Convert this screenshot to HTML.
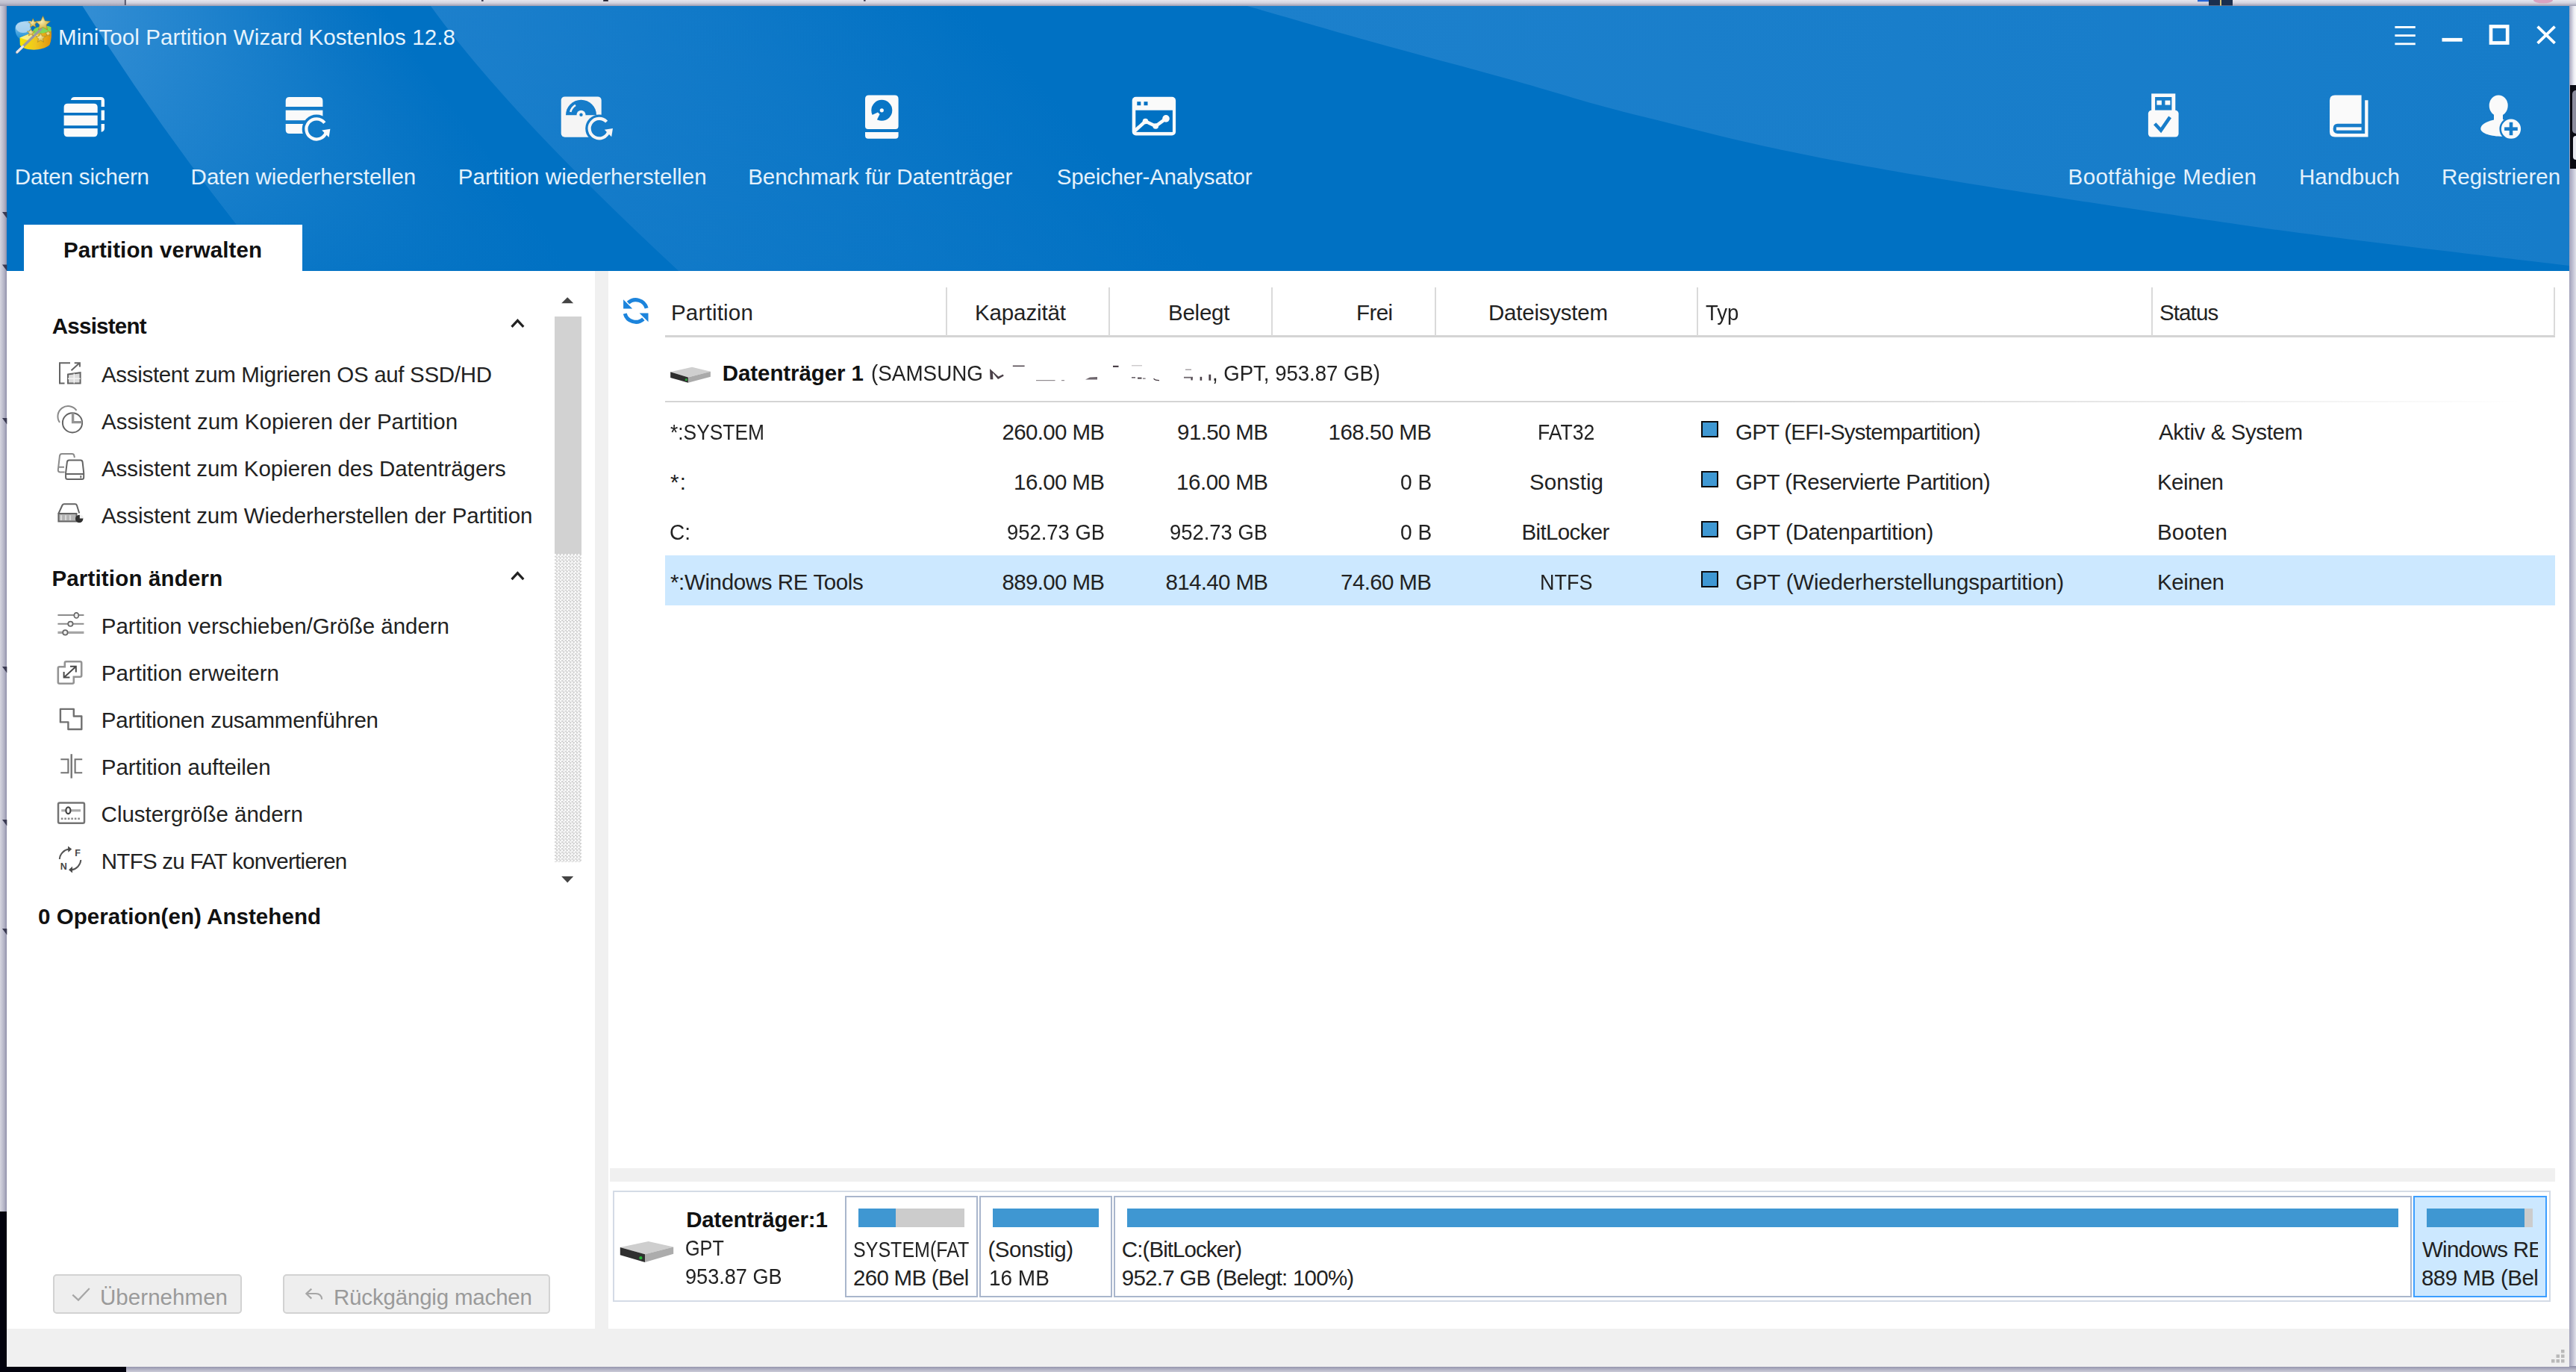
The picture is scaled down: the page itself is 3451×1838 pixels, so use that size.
<!DOCTYPE html>
<html lang="de">
<head>
<meta charset="utf-8">
<title>MiniTool Partition Wizard Kostenlos 12.8</title>
<style>
html,body{margin:0;padding:0;}
body{width:3451px;height:1838px;overflow:hidden;position:relative;background:#c9c9d6;font-family:"Liberation Sans",sans-serif;}
.a{position:absolute;}
.t{position:absolute;white-space:nowrap;line-height:1;color:#222222;font-family:"Liberation Sans",sans-serif;}
#bgtop{left:0;top:0;width:3451px;height:9px;background:linear-gradient(to bottom,#e6e6ee 0%,#d2d2de 45%,#8f8fa6 100%);}
#bgleft{left:0;top:8px;width:10px;height:1616px;background:linear-gradient(to right,#d6d6e0 0%,#b4b4c6 55%,#8787a2 100%);}
#bgleft2{left:0;top:1623px;width:10px;height:215px;background:#03030e;}
#bgright{left:3442px;top:8px;width:9px;height:1830px;background:linear-gradient(to right,#a1a1ba 0%,#b9b9cd 40%,#e0e0e9 100%);}
#bgrblack{left:3442.6px;top:113.5px;width:9px;height:112.5px;background:#0a0a12;}
#bgbot{left:0;top:1830px;width:3451px;height:9px;background:linear-gradient(to bottom,#8d8da6 0%,#b9b9ca 60%,#cfcfdb 100%);}
#bgbot2{left:0;top:1829px;width:169px;height:9px;background:#03030e;}
#win{left:9px;top:8.3px;width:3433.4px;height:1822.2px;background:#fff;}
#hdr{left:9px;top:8px;width:3433.4px;height:355px;background:#0071c3;overflow:hidden;}
#tab{left:31.5px;top:301px;width:373.5px;height:63px;background:#fff;}
#sbthumb{left:742.5px;top:424px;width:36px;height:317.5px;background:#d2d2d2;}
#sbtrack{left:742.5px;top:741.5px;width:36px;height:413.5px;background:repeating-conic-gradient(#d2d2d2 0% 25%,#ffffff 0% 50%) 0 0/4.5px 4.5px;}
#vdiv{left:797px;top:363px;width:18px;height:1417px;background:#f0f0f0;}
#hdiv{left:817px;top:1565px;width:2605.5px;height:18px;background:#f0f0f0;}
#status{left:9px;top:1780px;width:3433.4px;height:50.5px;background:#f0f0f0;}
.btn{background:#eeeeee;border:2px solid #d2d2d2;border-radius:5px;box-sizing:border-box;}
#thline{left:891px;top:449px;width:2532px;height:2.5px;background:#d4d4d4;}
.vsep{top:385px;width:2px;height:65px;background:#dadada;}
#dline{left:891px;top:536.5px;width:2490px;height:2.5px;background:linear-gradient(to right,#d4d4d4 0%,#d4d4d4 60%,rgba(212,212,212,0) 100%);}
#selrow{left:891px;top:744px;width:2531.5px;height:67px;background:#cce8ff;}
.sq{width:18.4px;height:17.7px;background:#3f98d3;border:2.3px solid #0b0b0d;box-sizing:content-box;left:2279.2px;}
#dmap{left:821px;top:1595px;width:2596px;height:149px;border:2px solid #d4dbe6;box-sizing:border-box;background:#fff;}
.pbox{top:1602px;height:136px;border:2px solid #a9b6cc;box-sizing:border-box;background:#fff;}
.pbar{top:1619px;height:25px;background:#3f97d2;}
.gbar{top:1619px;height:25px;background:#cccccc;}
</style>
</head>
<body>
<div class="a" id="bgtop"></div>
<div class="a" id="bgleft"></div>
<div class="a" id="bgleft2"></div>
<div class="a" id="bgright"></div>
<div class="a" style="left:3442px;top:8px;width:9px;height:106px;background:linear-gradient(to right,#a3a3bc 0%,#c8c8d8 35%,#ececf2 70%,#f8f8fa 100%);"></div>
<div class="a" id="bgrblack"></div>
<div class="a" style="left:3446px;top:121px;width:5px;height:58px;background:#8c8c9c;border-radius:5px 0 0 5px;"></div>
<div class="a" style="left:3447px;top:182px;width:4px;height:32px;background:#e8e8ee;border-radius:4px 0 0 4px;"></div>
<div class="a" id="bgbot"></div>
<div class="a" id="bgbot2"></div>
<div class="a" id="win"></div>
<div class="a" id="hdr">
<svg class="a" style="left:0;top:0" width="3434" height="355" viewBox="9 8 3434 355">
<defs>
<linearGradient id="gA" gradientUnits="userSpaceOnUse" x1="0" y1="0" x2="400" y2="0">
<stop offset="0" stop-color="#338ed4"/><stop offset="0.35" stop-color="#2284ce"/><stop offset="0.75" stop-color="#0d77c6"/><stop offset="1" stop-color="#0071c3"/>
</linearGradient>
<linearGradient id="gB" gradientUnits="userSpaceOnUse" x1="0" y1="0" x2="720" y2="0">
<stop offset="0" stop-color="#1d80cc"/><stop offset="0.5" stop-color="#1079c8"/><stop offset="1" stop-color="#0071c3"/>
</linearGradient>
<linearGradient id="gC" gradientUnits="userSpaceOnUse" x1="1667" y1="0" x2="3443" y2="0">
<stop offset="0" stop-color="#1c80cc"/><stop offset="1" stop-color="#167cc9"/>
</linearGradient>
<linearGradient id="gV" x1="0" y1="0" x2="0" y2="1"><stop offset="0" stop-color="#0071c3" stop-opacity="0"/><stop offset="1" stop-color="#0071c3" stop-opacity="0.8"/></linearGradient>
<clipPath id="cA"><path d="M110.5,8 Q221.9,185.9 366.7,363 L909.4,363 Q678.9,149.6 577,8 Z"/></clipPath>
<clipPath id="cB"><path d="M577,8 Q678.9,149.6 909.4,363 L2600,363 L2600,8 Z"/></clipPath>
</defs>
<g clip-path="url(#cA)"><rect x="-60" y="0" width="1000" height="355" fill="url(#gA)" transform="translate(110.5,8) skewX(35.8)"/><rect x="9" y="8" width="1000" height="355" fill="url(#gV)"/></g>
<g clip-path="url(#cB)"><rect x="-60" y="0" width="1500" height="355" fill="url(#gB)" transform="translate(577,8) skewX(43.1)"/><rect x="500" y="8" width="2200" height="355" fill="url(#gV)" opacity="0.55"/></g>
<path d="M1671,8 C1698.8,16.0 1779.0,39.5 1838,56 C1897.0,72.5 1964.7,90.3 2025,107 C2085.3,123.7 2123.3,137.2 2200,156 C2276.7,174.8 2349.2,195.5 2485,220 C2620.8,244.5 2855.3,280.3 3015,303 C3174.7,325.7 3371.7,347.2 3443,356 L3443,8 Z" fill="url(#gC)"/>
</svg>

</div>
<div class="a" id="tab"></div>
<div class="a" id="sbthumb"></div>
<div class="a" id="sbtrack"></div>
<div class="a" id="vdiv"></div>
<div class="a" id="hdiv"></div>
<div class="a" id="status"></div>
<div class="a btn" style="left:70.5px;top:1707px;width:253.5px;height:53px;"></div>
<div class="a btn" style="left:378.5px;top:1707px;width:358px;height:53px;"></div>
<div class="a" id="thline"></div>
<div class="a vsep" style="left:1267px;"></div>
<div class="a vsep" style="left:1485px;"></div>
<div class="a vsep" style="left:1703px;"></div>
<div class="a vsep" style="left:1921.5px;"></div>
<div class="a vsep" style="left:2272.7px;"></div>
<div class="a vsep" style="left:2882.4px;"></div>
<div class="a vsep" style="left:3421px;"></div>
<div class="a" id="dline"></div>
<div class="a" id="selrow"></div>
<div class="a sq" style="top:564px;"></div>
<div class="a sq" style="top:631px;"></div>
<div class="a sq" style="top:698.3px;"></div>
<div class="a sq" style="top:765.4px;"></div>
<div class="a" id="dmap"></div>
<div class="a pbox" style="left:1132px;width:177.5px;"></div>
<div class="a pbox" style="left:1312px;width:177.5px;"></div>
<div class="a pbox" style="left:1492px;width:1739px;"></div>
<div class="a pbox" style="left:3233px;width:178.5px;background:#cce8ff;border-color:#3c9eff;"></div>
<div class="a pbar" style="left:1150px;width:49.7px;"></div>
<div class="a gbar" style="left:1199.7px;width:92px;"></div>
<div class="a pbar" style="left:1330px;width:141.6px;"></div>
<div class="a pbar" style="left:1509.6px;width:1703.4px;"></div>
<div class="a pbar" style="left:3251px;width:130.6px;"></div>
<div class="a gbar" style="left:3381.6px;width:11.4px;"></div>
<span class="t" style="left:78.0px;top:34.8px;font-size:29.5px;color:#e6f3fc;letter-spacing:0.103px;">MiniTool Partition Wizard Kostenlos 12.8</span>
<span class="t" style="left:19.8px;top:222.2px;font-size:29.5px;color:#e4f1fb;letter-spacing:-0.151px;">Daten sichern</span>
<span class="t" style="left:255.6px;top:222.2px;font-size:29.5px;color:#e4f1fb;letter-spacing:-0.006px;">Daten wiederherstellen</span>
<span class="t" style="left:613.8px;top:222.2px;font-size:29.5px;color:#e4f1fb;letter-spacing:0.063px;">Partition wiederherstellen</span>
<span class="t" style="left:1002.2px;top:222.2px;font-size:29.5px;color:#e4f1fb;letter-spacing:-0.067px;">Benchmark für Datenträger</span>
<span class="t" style="left:1415.8px;top:222.2px;font-size:29.5px;color:#e4f1fb;letter-spacing:-0.213px;">Speicher-Analysator</span>
<span class="t" style="left:2770.6px;top:222.2px;font-size:29.5px;color:#e4f1fb;letter-spacing:0.399px;">Bootfähige Medien</span>
<span class="t" style="left:3080.0px;top:222.2px;font-size:29.5px;color:#e4f1fb;letter-spacing:0.043px;">Handbuch</span>
<span class="t" style="left:3271.0px;top:222.2px;font-size:29.5px;color:#e4f1fb;">Registrieren</span>
<span class="t" style="left:85.0px;top:320.2px;font-size:29.5px;font-weight:700;color:#111;letter-spacing:0.115px;">Partition verwalten</span>
<span class="t" style="left:69.8px;top:421.7px;font-size:29.5px;font-weight:700;color:#111;letter-spacing:-0.750px;">Assistent</span>
<span class="t" style="left:136.0px;top:487.0px;font-size:29.5px;letter-spacing:-0.318px;">Assistent zum Migrieren OS auf SSD/HD</span>
<span class="t" style="left:136.0px;top:550.1px;font-size:29.5px;">Assistent zum Kopieren der Partition</span>
<span class="t" style="left:136.0px;top:613.1px;font-size:29.5px;letter-spacing:-0.068px;">Assistent zum Kopieren des Datenträgers</span>
<span class="t" style="left:136.0px;top:676.0px;font-size:29.5px;letter-spacing:-0.070px;">Assistent zum Wiederherstellen der Partition</span>
<span class="t" style="left:69.4px;top:759.5px;font-size:29.5px;font-weight:700;color:#111;letter-spacing:0.173px;">Partition ändern</span>
<span class="t" style="left:135.8px;top:824.4px;font-size:29.5px;letter-spacing:-0.035px;">Partition verschieben/Größe ändern</span>
<span class="t" style="left:135.8px;top:887.4px;font-size:29.5px;letter-spacing:0.025px;">Partition erweitern</span>
<span class="t" style="left:135.8px;top:950.4px;font-size:29.5px;letter-spacing:-0.238px;">Partitionen zusammenführen</span>
<span class="t" style="left:135.8px;top:1013.4px;font-size:29.5px;letter-spacing:-0.064px;">Partition aufteilen</span>
<span class="t" style="left:135.6px;top:1076.4px;font-size:29.5px;letter-spacing:-0.020px;">Clustergröße ändern</span>
<span class="t" style="left:135.8px;top:1139.4px;font-size:29.5px;letter-spacing:-0.742px;">NTFS zu FAT konvertieren</span>
<span class="t" style="left:51.0px;top:1213.2px;font-size:29.5px;font-weight:700;color:#111;letter-spacing:0.061px;">0 Operation(en) Anstehend</span>
<span class="t" style="left:134.0px;top:1722.7px;font-size:29.5px;color:#9a9a9a;letter-spacing:0.050px;">Übernehmen</span>
<span class="t" style="left:447.0px;top:1722.7px;font-size:29.5px;color:#9a9a9a;letter-spacing:-0.185px;">Rückgängig machen</span>
<span class="t" style="left:899.0px;top:404.2px;font-size:29.5px;letter-spacing:0.196px;">Partition</span>
<span class="t" style="left:1306.0px;top:404.2px;font-size:29.5px;letter-spacing:-0.125px;">Kapazität</span>
<span class="t" style="left:1565.0px;top:404.2px;font-size:29.5px;letter-spacing:-0.251px;">Belegt</span>
<span class="t" style="left:1817.0px;top:404.2px;font-size:29.5px;letter-spacing:-0.604px;">Frei</span>
<span class="t" style="left:1994.0px;top:404.2px;font-size:29.5px;letter-spacing:-0.230px;">Dateisystem</span>
<span class="t" style="left:2285.0px;top:404.2px;font-size:29.5px;transform:scaleX(0.9335);transform-origin:0 0;">Typ</span>
<span class="t" style="left:2893.0px;top:404.2px;font-size:29.5px;letter-spacing:-0.888px;">Status</span>
<span class="t" style="left:967.8px;top:485.2px;font-size:29.5px;font-weight:700;color:#111;letter-spacing:-0.082px;">Datenträger 1</span>
<span class="t" style="left:1167.0px;top:485.2px;font-size:29.5px;transform:scaleX(0.9435);transform-origin:0 0;">(SAMSUNG</span>
<span class="t" style="left:1624.0px;top:485.2px;font-size:29.5px;transform:scaleX(0.9335);transform-origin:0 0;">, GPT, 953.87 GB)</span>
<span class="t" style="left:898.0px;top:563.7px;font-size:29.5px;transform:scaleX(0.8937);transform-origin:0 0;">*:SYSTEM</span>
<span class="t" style="left:1342.6px;top:563.7px;font-size:29.5px;letter-spacing:-0.661px;">260.00 MB</span>
<span class="t" style="left:1577.1px;top:563.7px;font-size:29.5px;letter-spacing:-0.623px;">91.50 MB</span>
<span class="t" style="left:1779.6px;top:563.7px;font-size:29.5px;letter-spacing:-0.536px;">168.50 MB</span>
<span class="t" style="left:2059.8px;top:563.7px;font-size:29.5px;transform:scaleX(0.9018);transform-origin:0 0;">FAT32</span>
<span class="t" style="left:2325.0px;top:563.7px;font-size:29.5px;letter-spacing:-0.766px;">GPT (EFI-Systempartition)</span>
<span class="t" style="left:2892.0px;top:563.7px;font-size:29.5px;letter-spacing:-0.412px;">Aktiv &amp; System</span>
<span class="t" style="left:898.0px;top:630.7px;font-size:29.5px;letter-spacing:1.312px;">*:</span>
<span class="t" style="left:1358.1px;top:630.7px;font-size:29.5px;letter-spacing:-0.623px;">16.00 MB</span>
<span class="t" style="left:1576.1px;top:630.7px;font-size:29.5px;letter-spacing:-0.480px;">16.00 MB</span>
<span class="t" style="left:1875.8px;top:630.7px;font-size:29.5px;transform:scaleX(0.9530);transform-origin:0 0;">0 B</span>
<span class="t" style="left:2049.0px;top:630.7px;font-size:29.5px;letter-spacing:0.099px;">Sonstig</span>
<span class="t" style="left:2325.0px;top:630.7px;font-size:29.5px;letter-spacing:-0.523px;">GPT (Reservierte Partition)</span>
<span class="t" style="left:2890.0px;top:630.7px;font-size:29.5px;letter-spacing:-0.572px;">Keinen</span>
<span class="t" style="left:897.0px;top:698.0px;font-size:29.5px;transform:scaleX(0.9492);transform-origin:0 0;">C:</span>
<span class="t" style="left:1349.0px;top:698.0px;font-size:29.5px;transform:scaleX(0.9288);transform-origin:0 0;">952.73 GB</span>
<span class="t" style="left:1567.0px;top:698.0px;font-size:29.5px;transform:scaleX(0.9288);transform-origin:0 0;">952.73 GB</span>
<span class="t" style="left:1875.8px;top:698.0px;font-size:29.5px;transform:scaleX(0.9530);transform-origin:0 0;">0 B</span>
<span class="t" style="left:2038.6px;top:698.0px;font-size:29.5px;letter-spacing:-0.648px;">BitLocker</span>
<span class="t" style="left:2325.0px;top:698.0px;font-size:29.5px;letter-spacing:-0.328px;">GPT (Datenpartition)</span>
<span class="t" style="left:2890.0px;top:698.0px;font-size:29.5px;letter-spacing:0.100px;">Booten</span>
<span class="t" style="left:898.0px;top:765.1px;font-size:29.5px;letter-spacing:-0.368px;">*:Windows RE Tools</span>
<span class="t" style="left:1342.6px;top:765.1px;font-size:29.5px;letter-spacing:-0.661px;">889.00 MB</span>
<span class="t" style="left:1561.6px;top:765.1px;font-size:29.5px;letter-spacing:-0.661px;">814.40 MB</span>
<span class="t" style="left:1796.1px;top:765.1px;font-size:29.5px;letter-spacing:-0.623px;">74.60 MB</span>
<span class="t" style="left:2062.8px;top:765.1px;font-size:29.5px;transform:scaleX(0.9139);transform-origin:0 0;">NTFS</span>
<span class="t" style="left:2325.0px;top:765.1px;font-size:29.5px;letter-spacing:-0.169px;">GPT (Wiederherstellungspartition)</span>
<span class="t" style="left:2890.0px;top:765.1px;font-size:29.5px;letter-spacing:-0.372px;">Keinen</span>
<span class="t" style="left:919.2px;top:1618.5px;font-size:29.5px;font-weight:700;color:#111;letter-spacing:-0.184px;">Datenträger:1</span>
<span class="t" style="left:918.0px;top:1656.7px;font-size:29.5px;transform:scaleX(0.8540);transform-origin:0 0;">GPT</span>
<span class="t" style="left:918.0px;top:1694.6px;font-size:29.5px;transform:scaleX(0.9188);transform-origin:0 0;">953.87 GB</span>
<span class="t" style="left:1143.0px;top:1658.9px;font-size:29.5px;transform:scaleX(0.8490);transform-origin:0 0;">SYSTEM(FAT</span>
<span class="t" style="left:1143.0px;top:1697.2px;font-size:29.5px;letter-spacing:-0.713px;">260 MB (Bel</span>
<span class="t" style="left:1323.4px;top:1658.9px;font-size:29.5px;letter-spacing:-0.406px;">(Sonstig)</span>
<span class="t" style="left:1324.8px;top:1697.2px;font-size:29.5px;transform:scaleX(0.9476);transform-origin:0 0;">16 MB</span>
<span class="t" style="left:1502.8px;top:1658.9px;font-size:29.5px;letter-spacing:-0.910px;">C:(BitLocker)</span>
<span class="t" style="left:1502.8px;top:1697.2px;font-size:29.5px;letter-spacing:-0.754px;">952.7 GB (Belegt: 100%)</span>
<span class="t" style="left:3245.0px;top:1658.9px;font-size:29.5px;letter-spacing:-0.759px;width:155.0px;overflow:hidden;">Windows RE Tools</span>
<span class="t" style="left:3244.0px;top:1697.2px;font-size:29.5px;letter-spacing:-0.553px;">889 MB (Bel</span>
<svg class="a" style="left:0;top:0" width="3451" height="1838" viewBox="0 0 3451 1838"><!-- ===== toolbar icons ===== -->
<g fill="#fafafa" stroke="none">
<!-- icon1: Daten sichern -->
<path d="M85.6,151.1 V143.7 Q85.6,138.7 90.6,138.7 H125.7 Q130.7,138.7 130.7,143.7 V151.1 Z"/>
<rect x="85.6" y="154.6" width="45.1" height="13.6"/>
<path d="M85.6,172.1 H130.7 V178.3 Q130.7,183.3 125.7,183.3 H90.6 Q85.6,183.3 85.6,178.3 Z"/>
<path d="M95,134 Q95.5,129.9 100,129.9 H135 Q140,129.9 140,134.9 V143 H135.6 V134 Z"/>
<rect x="135.6" y="147.7" width="4.4" height="13.5"/>
<path d="M135.6,165.9 H140 V172 Q140,176 135.6,176.8 Z"/>
</g>
<!-- icon2: Daten wiederherstellen -->
<mask id="m2" maskUnits="userSpaceOnUse" x="370" y="120" width="90" height="80"><rect x="370" y="120" width="90" height="80" fill="#fff"/><circle cx="424" cy="172.9" r="19.3" fill="#000"/></mask>
<g fill="#fafafa" mask="url(#m2)">
<path d="M382.7,142.9 V134.9 Q382.7,129.9 387.7,129.9 H427.4 Q432.4,129.9 432.4,134.9 V142.9 Z"/>
<rect x="382.7" y="147.7" width="49.7" height="13.5"/>
<path d="M382.7,165.9 H410 V179.1 H387.7 Q382.7,179.1 382.7,174.1 Z"/>
</g>
<g fill="none" stroke="#fafafa" stroke-width="4.2">
<path d="M434.8,164.6 A13.6,13.6 0 1 0 436.9,177.3"/>
</g>
<path d="M431.2,174.6 L442.4,172.8 L440.6,184 Z" fill="#fafafa"/>
<!-- icon3: Partition wiederherstellen -->
<mask id="m3" maskUnits="userSpaceOnUse" x="740" y="120" width="90" height="80"><rect x="740" y="120" width="90" height="80" fill="#fff"/>
<path d="M758,154.2 A20.5,20.5 0 0 1 799,154.2 Z" fill="#000"/>
<circle cx="778.5" cy="153.7" r="6" fill="#fff"/>
<circle cx="778.5" cy="153.7" r="2.2" fill="#000"/>
<path d="M764.3,150 A14.8,14.8 0 0 1 771,140.9" stroke="#fff" stroke-width="2.6" fill="none"/>
<circle cx="802.8" cy="172.1" r="18.6" fill="#000"/></mask>
<rect x="751.7" y="129.4" width="54" height="54.4" rx="5" fill="#f5f5f5" mask="url(#m3)"/>
<path d="M812.6,163.2 A13.2,13.2 0 1 0 815.4,176.2" fill="none" stroke="#f5f5f5" stroke-width="4.2"/>
<path d="M809.8,173.8 L821,172 L819.2,183.2 Z" fill="#f5f5f5"/>
<!-- icon4: Benchmark -->
<mask id="m4" maskUnits="userSpaceOnUse" x="1150" y="120" width="70" height="80"><rect x="1150" y="120" width="70" height="80" fill="#fff"/>
<circle cx="1181.3" cy="147.8" r="14" fill="#000"/>
<circle cx="1181.3" cy="147.8" r="2.6" fill="#fff"/>
<path d="M1178.6,152.9 L1174.4,161.2 A15.5,15.5 0 0 1 1167.4,154.6 L1176,150.4 Z" fill="#fff"/></mask>
<g fill="#fafafa" mask="url(#m4)">
<path d="M1159,132.5 Q1159,127.5 1164,127.5 H1198.6 Q1203.6,127.5 1203.6,132.5 V169 Q1203.6,173 1199.6,173 H1163 Q1159,173 1159,169 Z"/>
<path d="M1159,177 H1203.6 V181.7 Q1203.6,185.7 1199.6,185.7 H1163 Q1159,185.7 1159,181.7 Z"/>
</g>
<!-- icon5: Speicher-Analysator -->
<mask id="m5" maskUnits="userSpaceOnUse" x="1500" y="120" width="90" height="80"><rect x="1500" y="120" width="90" height="80" fill="#fff"/>
<rect x="1521.3" y="147.7" width="49.6" height="29.2" fill="#000"/>
<rect x="1523.3" y="136.2" width="5" height="5" fill="#000"/><rect x="1532.5" y="136.2" width="5" height="5" fill="#000"/>
<g stroke="#fff" stroke-width="4.6" fill="none" stroke-linejoin="round" stroke-linecap="round"><path d="M1519,176.5 L1534.5,162.5 L1548.2,169 L1562,158.9"/></g>
<circle cx="1534.5" cy="162.5" r="3.8" fill="#fff"/><circle cx="1548.2" cy="169" r="3.8" fill="#fff"/><circle cx="1562" cy="158.9" r="4.8" fill="#fff"/>
</mask>
<rect x="1516.7" y="129.7" width="58.4" height="51.8" rx="5" fill="#fafafa" mask="url(#m5)"/>
<!-- USB -->
<mask id="m6" maskUnits="userSpaceOnUse" x="2860" y="115" width="80" height="80"><rect x="2860" y="115" width="80" height="80" fill="#fff"/>
<rect x="2887.1" y="130" width="22.3" height="17.6" fill="#000"/>
<rect x="2889.4" y="134.6" width="6.5" height="6" fill="#fff"/><rect x="2900.5" y="134.6" width="6.9" height="6" fill="#fff"/>
<path d="M2886.7,165.8 L2894.9,174.6 L2907.1,156.9" stroke="#000" stroke-width="4.6" fill="none"/></mask>
<g fill="#fafafa" mask="url(#m6)">
<rect x="2882.2" y="125.4" width="32.1" height="24"/>
<rect x="2877.9" y="147.7" width="40.7" height="35.8" rx="4.5"/>
</g>
<!-- Book -->
<g fill="#fafafa">
<path d="M3163.6,127.4 H3128 Q3121,127.4 3121,134.4 V176.5 Q3121,183.5 3128,183.5 H3172.5 V134.3 H3168.2 V178.9 H3131.6 Q3125.6,178.9 3125.6,172.4 Q3125.6,165.8 3131.6,165.8 H3163.6 Z"/>
<rect x="3129.9" y="170.4" width="33.7" height="4.2"/>
</g>
<!-- User -->
<mask id="m8" maskUnits="userSpaceOnUse" x="3310" y="115" width="80" height="80"><rect x="3310" y="115" width="80" height="80" fill="#fff"/><circle cx="3364" cy="172.7" r="15.6" fill="#000"/></mask>
<g fill="#fafafa" mask="url(#m8)">
<ellipse cx="3347.2" cy="141.5" rx="12.5" ry="14.1"/>
<path d="M3341,150 H3353 V163 H3341 Z"/>
<path d="M3341,160.5 C3330,163 3323.3,167 3323.3,172.5 C3323.3,179 3338,182.8 3352,182.8 L3360,182.8 L3360,160 Z"/>
</g>
<mask id="m9" maskUnits="userSpaceOnUse" x="3340" y="150" width="50" height="45"><rect x="3340" y="150" width="50" height="45" fill="#fff"/><rect x="3355.1" y="170.4" width="17.7" height="4.6" fill="#000"/><rect x="3361.7" y="163.8" width="4.6" height="17.4" fill="#000"/></mask>
<circle cx="3364" cy="172.7" r="13.1" fill="#fafafa" mask="url(#m9)"/>
<!-- window controls -->
<g fill="#ffffff">
<rect x="3208.4" y="35" width="27.4" height="2.8"/><rect x="3208.4" y="46.2" width="27.4" height="2.8"/><rect x="3208.4" y="57.4" width="27.4" height="2.8"/>
<rect x="3271.5" y="50.9" width="27.2" height="4.8"/>
</g>
<rect x="3337" y="35.5" width="22.2" height="22" fill="none" stroke="#fff" stroke-width="4.7"/>
<path d="M3399.6,35.6 L3422.6,57.9 M3422.6,35.6 L3399.6,57.9" stroke="#fff" stroke-width="3.8" fill="none"/>
<!-- ===== app icon ===== -->
<defs>
<linearGradient id="gy" x1="0" y1="0" x2="1" y2="0"><stop offset="0" stop-color="#f7e600"/><stop offset="0.5" stop-color="#efc520"/><stop offset="1" stop-color="#e0920c"/></linearGradient>
<linearGradient id="gbl" x1="0" y1="0" x2="0" y2="1"><stop offset="0" stop-color="#a6d2f0"/><stop offset="1" stop-color="#1a8ed6"/></linearGradient>
<radialGradient id="gst" cx="0.4" cy="0.4" r="0.7"><stop offset="0" stop-color="#f6ecae"/><stop offset="1" stop-color="#c9a227"/></radialGradient>
</defs>
<g>
<path d="M20.4,38 C20.4,30 31,27.5 42,28 L41,45 L26.5,52 C22,49 20.4,44 20.4,38 Z" fill="url(#gbl)"/>
<ellipse cx="31" cy="36.5" rx="10" ry="7.5" fill="#b6daf3" opacity="0.8"/>
<path d="M26.5,50.5 L42,44 L68.5,40 C69.5,46 69,54 66.5,60 C60,66 48,67.5 40,66.3 C33,65.5 28,63 26.8,60 Z" fill="url(#gy)"/>
<path d="M42,44.5 L46,38.5 C54,34 64,33 68.5,36.5 L68.5,41.5 C62,44.5 52,45.5 42,44.5 Z" fill="#7fd957"/>
<path d="M26.5,50.5 L42,44.5 L52,47 L37,54 Z" fill="#fbf3a0" opacity="0.8"/>
<path d="M22.6,70.2 L55.3,38.6" stroke="#9a9aa2" stroke-width="3.4" stroke-linecap="round"/>
<path d="M23,69.6 L30.5,62.4" stroke="#e4e4ea" stroke-width="3" stroke-linecap="round"/>
<g fill="url(#gst)" stroke="#a8861c" stroke-width="0.6">
<path d="M44.2,24.8 L45.9,29 L50.4,29.3 L46.9,32.2 L48,36.6 L44.2,34.2 L40.4,36.6 L41.5,32.2 L38,29.3 L42.5,29 Z"/>
<path d="M57.5,21.5 L60.3,28 L67.3,28.6 L62,33.2 L63.6,40 L57.5,36.4 L51.4,40 L53,33.2 L47.7,28.6 L54.7,28 Z"/>
<path d="M41.5,38.5 L42.9,41.8 L46.5,42.1 L43.8,44.4 L44.6,47.9 L41.5,46 L38.4,47.9 L39.2,44.4 L36.5,42.1 L40.1,41.8 Z"/>
<path d="M54.5,44 L56.4,48.3 L61.1,48.7 L57.5,51.8 L58.6,56.4 L54.5,54 L50.4,56.4 L51.5,51.8 L47.9,48.7 L52.6,48.3 Z"/>
<path d="M64.5,41 L65.6,43.6 L68.4,43.8 L66.3,45.7 L66.9,48.4 L64.5,47 L62.1,48.4 L62.7,45.7 L60.6,43.8 L63.4,43.6 Z"/>
</g>
</g>
<!-- ===== left panel icons ===== -->
<g fill="none" stroke="#646464" stroke-width="2">
<!-- L1 migrate -->
<path d="M94,486.2 H80 V513.5 H86.5"/>
<path d="M95.5,496.2 L106.3,486.4 M99.7,486.2 H106.9 V491.4"/>
<path d="M91,501.6 L107.6,499.2 V513.5 H91 Z" fill="#dcdcdc"/>
<path d="M99.3,500.6 V513.5 M91,507.3 H107.6" stroke="#f4f4f4" stroke-width="1.4"/>
<!-- L2 copy partition -->
<path d="M80,566 A13.6,13.6 0 0 1 102.5,549.8" stroke="#8a8a8a"/>
<circle cx="97" cy="566.4" r="13.1"/>
<path d="M97.6,553.2 V565.6 H110" stroke="#949494" stroke-width="3.4"/>
<!-- L3 copy disk -->
<path d="M99.9,613 L99.4,610.5 Q99,608 96.5,608 H83 Q80.4,608 80,610.5 L77.8,629.5 Q77.8,632.4 80.5,632.4 H86.6 M77.8,625.8 H86" stroke="#8a8a8a"/>
<path d="M92.5,616.6 H108 Q110.2,616.6 110.6,619 L112.2,633.5 V639.5 Q112.2,642 109.7,642 H90.6 Q88.1,642 88.1,639.5 V633.5 L89.9,619 Q90.3,616.6 92.5,616.6 Z M88.3,635 H112"/>
<path d="M108.3,637 V640.5" stroke-width="1.8"/>
<!-- L4 restore partition -->
<path d="M78.4,688 L83.5,676.8 Q84.3,675.2 86,675.2 H100.6 Q102.3,675.2 102.9,676.8 L106.2,687.5"/>
<path d="M78.4,688 H102.5 V698.6 H78.4 Z" fill="#b4b4b4"/>
</g>
<path d="M82,690.3 V697 M88,690.3 V697 M94,690.3 V697" stroke="#d8d8d8" stroke-width="2.2" fill="none"/>
<circle cx="106.2" cy="695" r="5.2" fill="#2f2f2f"/>
<path d="M106.8,694.4 V689.2 A5.2,5.2 0 0 1 111.4,694.4 Z" fill="#f2f2f2"/>
<!-- L5 sliders -->
<g fill="none" stroke="#8c8c8c" stroke-width="2">
<path d="M77.4,824 H112.4 M77.4,835.8 H112.4"/>
<path d="M77.4,847.4 H112.4" stroke-width="3.2" stroke="#a6a6a6"/>
</g>
<g fill="#efefef" stroke="#666" stroke-width="1.7">
<ellipse cx="102.3" cy="824.4" rx="3" ry="3.6"/><circle cx="94.4" cy="835.8" r="3.2"/><circle cx="87.4" cy="847.4" r="3.2"/>
</g>
<!-- L6 extend -->
<path d="M86.8,893.2 V888.2 Q86.8,886.2 88.8,886.2 H107.2 Q109.2,886.2 109.2,888.2 V904.8 Q109.2,906.8 107.2,906.8 H98.8 V913.8 Q98.8,915.8 96.8,915.8 H79.8 Q77.8,915.8 77.8,913.8 V895.2 Q77.8,893.2 79.8,893.2 Z" fill="none" stroke="#949494" stroke-width="2.6"/>
<path d="M86.3,907 L101.3,893.2 M94,892.8 H101.8 V900.6 M85.6,900 V907.6 H93.4" fill="none" stroke="#4a4a4a" stroke-width="2"/>
<!-- L7 merge -->
<path d="M80.9,949.9 H98.8 V959.5 H109.3 V977 H91.4 V967.4 H80.9 Z" fill="none" stroke="#707070" stroke-width="2.4" stroke-linejoin="round"/>
<!-- L8 split -->
<g fill="none" stroke="#747474" stroke-width="2.1">
<path d="M95.7,1010.2 V1042.6" stroke-width="2.4"/>
<path d="M81.3,1017.2 H91.4 V1035.2 H81.3"/>
<path d="M110.2,1017.2 H100.6 V1035.2 H110.2"/>
</g>
<!-- L9 cluster -->
<rect x="78" y="1075.5" width="35" height="27.2" rx="2" fill="none" stroke="#747474" stroke-width="2.5"/>
<path d="M82.2,1085.8 H108" stroke="#ababab" stroke-width="3.2" fill="none"/>
<ellipse cx="91.4" cy="1085.8" rx="3" ry="4.4" fill="#fff" stroke="#444" stroke-width="2.2"/>
<path d="M81.8,1096.7 H108" stroke="#8a8a8a" stroke-width="2.6" stroke-dasharray="2.6 1.9" fill="none"/>
<!-- L10 NTFS to FAT -->
<g fill="none" stroke="#555" stroke-width="2">
<path d="M79.8,1151 A14.4,14.4 0 0 1 92.6,1137.6"/>
<path d="M108.3,1152 A14.4,14.4 0 0 1 95.6,1165.3"/>
</g>
<path d="M91,1133.4 L96.2,1137.4 L91.4,1141.8 Z M97,1160.8 L92,1165.2 L97,1169.4 Z" fill="#4a4a4a"/>
<text x="100.2" y="1147.3" font-family="Liberation Sans, sans-serif" font-weight="700" font-size="12.5" fill="#444">F</text>
<text x="80.8" y="1165.2" font-family="Liberation Sans, sans-serif" font-weight="700" font-size="12.5" fill="#444">N</text>
<!-- chevrons -->
<g fill="none" stroke="#222" stroke-width="3.2">
<path d="M685.5,437.8 L693.4,429.3 L701.3,437.8"/>
<path d="M685.5,776.2 L693.4,767.7 L701.3,776.2"/>
</g>
<!-- scroll arrows -->
<path d="M752.2,406.3 L760.2,398.3 L768.2,406.3 Z" fill="#444"/>
<path d="M752.2,1174 L760.2,1182.4 L768.2,1174 Z" fill="#444"/>
<!-- button icons -->
<path d="M97.3,1734.6 L105,1741.6 L119.8,1726" fill="none" stroke="#a6a6a6" stroke-width="2.2"/>
<path d="M417.3,1726.6 L410.4,1733 L417.3,1739.6 M410.8,1733 H423 Q430.6,1733 431.2,1740.6" fill="none" stroke="#a6a6a6" stroke-width="2.2"/>
<!-- refresh -->
<g fill="none" stroke="#1c84dc" stroke-width="5">
<path d="M866.2,412.9 A15,15 0 0 0 841.5,405.7"/>
<path d="M837.2,420.1 A15,15 0 0 0 861.9,427.3"/>
</g>
<path d="M835.1,401.2 V413.6 H847.2 Z M868.5,431.2 V419.4 H856.6 Z" fill="#1c84dc"/>
<!-- disk icon (table) -->
<g id="dsk">
<path d="M898.2,498.2 L927.1,491.8 L951.9,497.8 L921.9,505.5 Z" fill="#cfcfcf"/>
<path d="M921.9,505.5 L951.9,497.8 L951.9,504.7 L921.9,512.7 Z" fill="#aaaaaa"/>
<path d="M898.2,498.2 L921.9,505.5 L921.9,512.7 L898.2,505.9 Z" fill="#2e2e2e"/>
<circle cx="919.3" cy="508.7" r="1.6" fill="#2aa83a"/>
</g>
<!-- disk icon (map) -->
<path d="M830.8,1671.1 L868.6,1663 L902.2,1670.6 L864,1680.3 Z" fill="#cecece"/>
<path d="M864,1680.3 L902.2,1670.6 L902.2,1679.8 L864,1691 Z" fill="#acacac"/>
<path d="M830.8,1671.1 L864,1680.3 L864,1691 L830.8,1681.3 Z" fill="#2f2f2f"/>
<circle cx="858.4" cy="1685.2" r="2.1" fill="#25b637"/>
<!-- status grip -->
<g fill="#b9b9b9">
<rect x="3431" y="1808" width="4.5" height="4.5"/>
<rect x="3424.5" y="1814.5" width="4.5" height="4.5"/><rect x="3431" y="1814.5" width="4.5" height="4.5"/>
<rect x="3418" y="1821" width="4.5" height="4.5"/><rect x="3424.5" y="1821" width="4.5" height="4.5"/><rect x="3431" y="1821" width="4.5" height="4.5"/>
</g>
<!-- erased model-name remnants -->
<g fill="#4a4048">
<path d="M1326,494 L1326.6,508.3 L1330.4,508.3 L1330,499.5 L1337,508 L1344.8,503.6 L1343.6,501.6 L1337.6,504.6 Z"/>
<rect x="1356.8" y="489.6" width="15.8" height="1.5"/>
<rect x="1388" y="509" width="25.5" height="1.2" opacity="0.6"/>
<rect x="1422" y="509" width="4" height="1.2" opacity="0.6"/>
<path d="M1454,508.6 L1460,505.4 L1470,505 L1470,508.6 Z" opacity="0.8"/>
<rect x="1491" y="489.8" width="7.5" height="2.2"/>
<rect x="1516" y="489.3" width="14" height="1" opacity="0.4"/>
<rect x="1516" y="505" width="5" height="1.6" opacity="0.8"/><rect x="1524" y="505.6" width="5.5" height="2"/><rect x="1531" y="506.4" width="3.6" height="1.4" opacity="0.7"/>
<path d="M1545,507.4 Q1547,510.4 1553,510.2 L1553,509 Q1548,509 1546,506.8 Z"/>
<rect x="1588" y="494.6" width="8" height="1.2" opacity="0.6"/>
<rect x="1586" y="504.8" width="12" height="1.8" opacity="0.8"/><rect x="1595.5" y="506" width="2.2" height="3.4"/>
<rect x="1607.6" y="504.8" width="2.6" height="4.9"/>
<rect x="1619.4" y="501.7" width="2.8" height="8"/>
</g>
<!-- outside-window bits -->
<g fill="#3a3a52">
<path d="M3,284 L9.3,284 L9.3,292.5 Z"/><path d="M3,354.5 L9.3,354.5 L9.3,363 Z"/><path d="M3,560 L9.3,560 L9.3,568.5 Z"/>
<path d="M3,893 L9.3,893 L9.3,901.5 Z"/><path d="M3,1098 L9.3,1098 L9.3,1106.5 Z"/><path d="M3,1244 L9.3,1244 L9.3,1252.5 Z"/>
</g>
<rect x="166.8" y="0" width="2" height="7" fill="#55556a"/>
<rect x="0" y="0" width="167" height="8" fill="#9a9aae" opacity="0.35"/>
<rect x="2959" y="0" width="32" height="7.5" fill="#1b2f4e"/><rect x="2974" y="0" width="2" height="7.5" fill="#d8c27a"/>
<rect x="2944" y="0" width="15" height="2.2" fill="#2463d6"/>
<ellipse cx="3407" cy="0" rx="13" ry="4.5" fill="#d9a3c0"/>
<rect x="645" y="0" width="2.6" height="1.8" fill="#33334a"/><rect x="808" y="0" width="7" height="1.8" rx="1" fill="#1a1a2a"/><rect x="1157" y="0" width="2.6" height="1.6" fill="#33334a"/>
</svg>
</body>
</html>
